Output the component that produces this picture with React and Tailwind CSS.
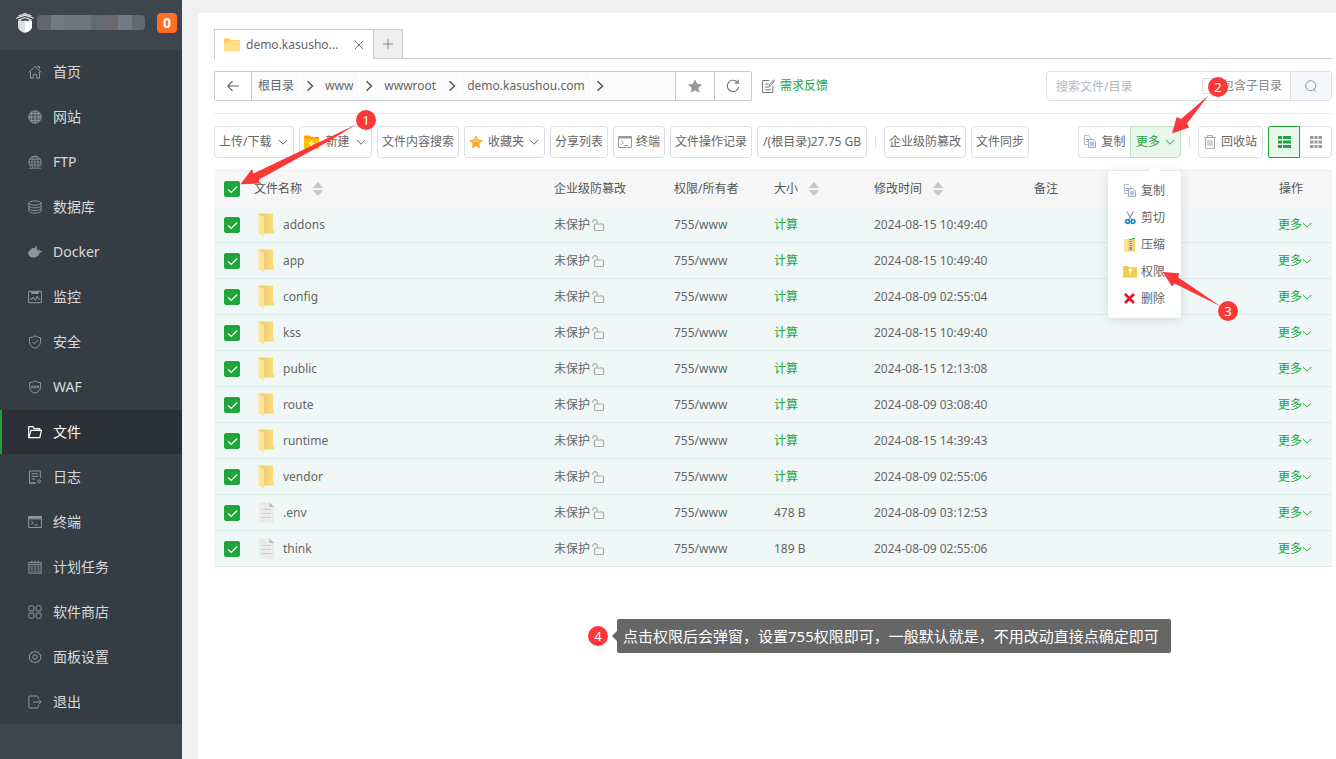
import { useState } from 'react';

const MENU = [
  { name: '首页', icon: 'home' },
  { name: '网站', icon: 'site' },
  { name: 'FTP', icon: 'ftp' },
  { name: '数据库', icon: 'database' },
  { name: 'Docker', icon: 'docker' },
  { name: '监控', icon: 'monitor' },
  { name: '安全', icon: 'safe' },
  { name: 'WAF', icon: 'waf' },
  { name: '文件', icon: 'files' },
  { name: '日志', icon: 'logs' },
  { name: '终端', icon: 'terminal' },
  { name: '计划任务', icon: 'cron' },
  { name: '软件商店', icon: 'soft' },
  { name: '面板设置', icon: 'config' },
  { name: '退出', icon: 'exit' },
];

const FILES = [
  { name: 'addons', dir: true, time: '2024-08-15 10:49:40' },
  { name: 'app', dir: true, time: '2024-08-15 10:49:40' },
  { name: 'config', dir: true, time: '2024-08-09 02:55:04' },
  { name: 'kss', dir: true, time: '2024-08-15 10:49:40' },
  { name: 'public', dir: true, time: '2024-08-15 12:13:08' },
  { name: 'route', dir: true, time: '2024-08-09 03:08:40' },
  { name: 'runtime', dir: true, time: '2024-08-15 14:39:43' },
  { name: 'vendor', dir: true, time: '2024-08-09 02:55:06' },
  { name: '.env', size: '478 B', time: '2024-08-09 03:12:53' },
  { name: 'think', size: '189 B', time: '2024-08-09 02:55:06' },
];

const PATHS = ['根目录', 'www', 'wwwroot', 'demo.kasushou.com'];

const MOSAIC = ['bg-[#5f6771]', 'bg-[#757982]', 'bg-[#6f757c]', 'bg-[#70747b]', 'bg-[#626a74]', 'bg-[#686a72]', 'bg-[#727a87]', 'bg-[#616870]'];

const MENU_ICONS = {
  home: <><path d="M.8 7.4 7 1.5l6.2 5.9M2.5 6.5v6.700h2.800V9.400h3.400v3.800h2.800V6.500" /><path d="M9.200 1.500h2.300v2.300" /></>,
  site: <><circle cx="7" cy="7" r="6.200" fill="currentColor" fillOpacity=".25" /><path d="M7 .8v12.400M.8 7h12.400M2 3.600h10M2 10.400h10M4.200 1.600c-1.300 3.400-1.300 7.400 0 10.800M9.800 1.600c1.300 3.400 1.300 7.400 0 10.800" /></>,
  ftp: <><path d="M2.700 11.600A6.100 6.100 0 1 1 11.300 11.600" /><path d="M7 .8v12M.8 7h12.400M4.600 12.800C3.400 9 3.700 4 5.400 1M9.400 12.800C10.600 9 10.300 4 8.600 1M.8 13.200h12.400M1.800 10h10.400M1.900 4.200h10.200" strokeWidth=".8" /></>,
  database: <><ellipse cx="7" cy="3" rx="6.100" ry="2.100" /><path d="M.9 3v7.900c0 1.200 2.700 2.200 6.100 2.200s6.100-1 6.100-2.200V3M.9 5.700C.9 6.900 3.600 7.800 7 7.800s6.100-.9 6.100-2.100M.9 8.400c0 1.200 2.700 2.100 6.100 2.100s6.100-.9 6.100-2.100" /></>,
  docker: <path fill="currentColor" stroke="none" d="M0 6.500h1.600V4.700h1.800V3h1.800v1.700h.2V3h1.700V1.200h1.700v3.500h1.600v1.800h.5c.4-.5.3-1.300 0-2 .9.3 1.300.9 1.400 1.500.6-.1 1.200 0 1.700.3-.3.9-1.100 1.200-2 1.200C10.900 10.500 8.800 12.600 5 12.600 2 12.600.2 10.500 0 6.500z" />,
  monitor: <><path d="M.6 1.300h12.800v11.400H.6zM3.600 1.600v1.800h6.800V1.600M2 9h2l1.300-2 2 3.500L9.200 6l1.300 3H12" /><path d="M4 2.400h6" strokeWidth="1.800" /></>,
  safe: <><path d="M7 .8c1.700 1.200 3.600 1.700 5.500 1.800v4.200c0 3.200-2.200 5.300-5.500 6.500-3.300-1.200-5.500-3.300-5.500-6.500V2.600C3.400 2.500 5.300 2 7 .8z" /><path d="m4.300 6.800 2 2 3.700-3.700" /></>,
  waf: <><path d="M7 .8c1.700 1.200 3.600 1.700 5.500 1.800v4.200c0 3.200-2.200 5.300-5.500 6.500-3.300-1.200-5.500-3.300-5.500-6.500V2.600C3.400 2.500 5.300 2 7 .8z" /><path strokeWidth="2.600" strokeOpacity=".75" strokeDasharray="2.400 .4" d="M3 6.900h8" /></>,
  files: <path strokeWidth="1.200" d="M.7 12.600V1.700h4.200l1.300 2h5.600v1.600M.8 12.600h11l1.600-7.200H3.100z" />,
  logs: <><path d="M12.300 8V1H1.500v12H8M3.700 3.800h6.400M3.700 6.400h6.400M3.700 9h3.500" /><path d="M.8 13h7" /><circle cx="11" cy="11.400" r="1.500" /></>,
  terminal: <><path d="M.6 1.500h12.800v11H.6zM.6 3.900h12.800M3.200 6l2 1.700-2 1.700M6.600 10h3.200" /><path d="M1 2.700h12" strokeWidth="1.400" /></>,
  cron: <><path d="M.9 2.400h12.200v10.700H.9zM3.900.7v2.600M7 .7v2.600M10.100.7v2.600M.9 4.700h12.200" /><path strokeDasharray="2.400 1" d="M2.400 6.900h9.600M2.400 9h9.600M2.400 11.100h9.600" /></>,
  soft: <><rect x=".9" y=".9" width="5" height="5" rx="1" /><rect x="8.100" y=".9" width="5" height="5" rx="1" /><rect x=".9" y="8.100" width="5" height="5" rx="1" /><rect x="8.100" y="8.100" width="5" height="5" rx="1" /></>,
  config: <><path d="M7 .8l1.500 1.400 2-.2.700 2 1.800 1-.6 2 .6 2-1.800 1-.7 2-2-.2L7 13.200l-1.500-1.400-2 .2-.7-2L1 9l.6-2L1 5l1.800-1 .7-2 2 .2z" /><circle cx="7" cy="7" r="2.200" /></>,
  exit: <path d="M10.400 3.600V2a1 1 0 0 0-1-1H1.900a1 1 0 0 0-1 1v10a1 1 0 0 0 1 1h7.500a1 1 0 0 0 1-1v-1.600M5 7h8.200M10.800 4.600 13.200 7l-2.400 2.400" />,
};

const MenuIcon = ({ name }) => (
  <svg viewBox="0 0 14 14" className="size-3.5 shrink-0" fill="none" stroke="currentColor" strokeWidth="1">
    {MENU_ICONS[name]}
  </svg>
);

const ChevronDown = ({ className = '' }) => (
  <svg viewBox="0 0 10 10" className={`size-2.5 shrink-0 ${className}`} fill="none" stroke="currentColor" strokeWidth="1">
    <path d="m.8 3 4.200 4.200L9.200 3" />
  </svg>
);

const ChevronRight = () => (
  <svg viewBox="0 0 10 12" className="h-3 w-2.5" fill="none" stroke="#555" strokeWidth="1.500">
    <path d="m2.500 1.200 5 4.800-5 4.800" />
  </svg>
);

const FolderOpen = () => (
  <svg viewBox="0 0 18 24" className="h-6 w-[18px] shrink-0">
    <defs>
      <linearGradient id="folder" x1="0" x2="1">
        <stop offset="0" stopColor="#ecc65c" />
        <stop offset="1" stopColor="#fadb83" />
      </linearGradient>
    </defs>
    <path d="M1.500.500H16V20.500H5z" fill="url(#folder)" />
    <path d="M15 17.500h1.800l.7 3h-2.500z" fill="#fadb83" />
    <path d="M1.500.500 7 4v20l-5.500-3.500z" fill="#ffe596" />
  </svg>
);

const FileIcon = () => (
  <svg viewBox="0 0 18 24" className="h-6 w-[18px] shrink-0">
    <path d="M2 1.500h10.500L17 6v15.500H2z" fill="#ebebeb" />
    <path d="M12.500 1.500 17 6h-4.500z" fill="#b9b9b9" />
    <path d="M5 8.500h9M5 12.500h9M5 16.500h9" stroke="#cfcccc" />
  </svg>
);

const Unlock = () => (
  <svg viewBox="0 0 14 14" className="ml-px size-3.5 shrink-0" fill="none" stroke="#aaa" strokeWidth="1.200">
    <rect x="3.500" y="6" width="9" height="6.500" rx="1" />
    <path d="M6.300 6V4a2.300 2.300 0 0 0-4.600 0v.8" />
  </svg>
);

const SortIcon = () => (
  <svg viewBox="0 0 12 14" className="h-3.5 w-3" fill="#c6c6c6">
    <path d="M6 0l5.300 6H.7zM6 14l5.300-6H.7z" />
  </svg>
);

const CopyIcon = () => (
  <svg viewBox="0 0 14 14" className="size-3.5 shrink-0" strokeWidth="1">
    <path d="M1.500.500h4L8 3v6.500H1.500z" fill="#fff" stroke="#b3b8be" />
    <path d="M3 4.500h3M3 6.500h3" stroke="#86acdf" />
    <path d="M5.500 4.500h4.600l2.400 2.300v5.700h-7z" fill="#e8f1ff" stroke="#a4acb6" />
    <path d="M7 8h4M7 10h4" stroke="#6c9cdf" />
  </svg>
);

const CutIcon = () => (
  <svg viewBox="0 0 14 14" className="size-3.5 shrink-0" fill="none">
    <path d="M4 .500 8.800 9M10.500.500 5.500 9" stroke="#8b959e" strokeWidth="1.200" />
    <circle cx="4.500" cy="10.500" r="1.900" stroke="#2088d0" strokeWidth="1.700" />
    <circle cx="10" cy="10.500" r="1.900" stroke="#2088d0" strokeWidth="1.700" />
  </svg>
);

const ZipIcon = () => (
  <svg viewBox="0 0 14 14" className="size-3.5 shrink-0">
    <path d="M1.500 1h10.500v12.500H1.500z" fill="#f3d165" />
    <path d="M1.500 1h3.500v12.500H1.500z" fill="#ffe28b" />
    <path d="M6 .500h3.500v13H6z" fill="#d9d6c7" />
    <path d="M7.700 1v8" stroke="#777" strokeWidth="2" strokeDasharray="1 1" />
    <path d="M6.700 9h2v3h-2z" fill="#888" />
    <path d="M9 .500h3" stroke="#2fc22f" />
  </svg>
);

const PermissionIcon = () => (
  <svg viewBox="0 0 14 14" className="size-3.5 shrink-0">
    <path d="M0 1h5l1 1.300h8V12.500H0z" fill="#f2cb4a" />
    <path d="M5.600 5a1.600 1.600 0 1 1 2.100 1.500V10H6.600V6.500A1.600 1.600 0 0 1 5.600 5z" fill="#fff" />
  </svg>
);

const DeleteIcon = () => (
  <svg viewBox="0 0 14 14" className="size-3.5 shrink-0" stroke="#dd1426" strokeWidth="2.600">
    <path d="m2 2 9 9M11 2l-9 9" />
  </svg>
);

const TerminalIcon = () => (
  <svg viewBox="0 0 14 12" className="h-3 w-3.5 shrink-0" fill="none" stroke="#999">
    <path d="M.5.500h13v11H.5z" />
    <path d="M.5 1.500h13" strokeWidth="2" />
    <path d="M3 4.500 5.500 6.700 3 9M6.500 9.500H10" />
  </svg>
);

const Check = ({ checked, onChange, label }) => (
  <span className="relative block size-4">
    <input
      type="checkbox"
      aria-label={label}
      checked={checked}
      onChange={onChange}
      className="block size-4 appearance-none rounded-xs border border-[#ccc] bg-white checked:border-[#20a53a] checked:bg-[#20a53a]"
    />
    {checked && (
      <svg viewBox="0 0 16 16" className="pointer-events-none absolute inset-0 size-4" fill="none" stroke="#fff" strokeWidth="1.200">
        <path d="m4 8.300 3.200 3.200 6-6" />
      </svg>
    )}
  </span>
);

const ToolButton = ({ className = '', children }) => (
  <button type="button" className={`flex h-8 shrink-0 items-center rounded border border-[#dcdfe6] bg-white px-1 whitespace-nowrap ${className}`}>
    {children}
  </button>
);

const Divider = () => <span className="mx-[3px] h-3 w-px shrink-0 bg-[#dcdfe6]" />;

const Marker = ({ className = '', children }) => (
  <span className={`flex size-5 items-center justify-center rounded-full bg-[#fb3838] text-[13px] leading-5 text-white ${className}`}>
    {children}
  </span>
);

const Sidebar = () => (
  <aside className="w-[182px] shrink-0 bg-[#3d454e] text-sm">
    <div className="flex h-[50px] items-start pt-3 pr-[5px] pl-4">
      <svg viewBox="0 0 18 22" className="h-[22px] w-[18px] shrink-0">
        <path d="M2 9 4.500 8 6 9.300 9 8.500v12.300C5 20 2 17.500 2 14.500z" fill="#dedede" />
        <path d="M16 9 13.500 8 12 9.300 9 8.500v12.300c4-.8 7-3.300 7-6.300z" fill="#fff" />
        <path d="M.3 6.300 9 3.200l8.700 3.100M2.200 8.200 9 5.500l6.800 2.700M2.500 3.900 9 1.500l6.500 2.400" fill="none" stroke="#eee" strokeWidth="1.100" />
      </svg>
      <div className="mt-[3px] ml-[3px] flex h-[15px] flex-1 overflow-hidden rounded-sm">
        {MOSAIC.map((color) => (
          <span key={color} className={`flex-1 ${color}`} />
        ))}
      </div>
      <span className="mt-px ml-3 flex size-5 items-center justify-center rounded bg-[#ff6e27] font-bold text-white">0</span>
    </div>
    <nav className="bg-[#353d44]">
      {MENU.map((item) => (
        <a
          key={item.icon}
          href={`#${item.icon}`}
          className={
            item.icon === 'files'
              ? 'mb-px flex h-11 items-center gap-[11px] border-l-2 border-[#20a53a] bg-[#2c3138] pl-[26px] text-white'
              : 'mb-px flex h-11 items-center gap-[11px] border-l-2 border-transparent pl-[26px] text-[#929598]'
          }
        >
          <MenuIcon name={item.icon} />
          <span className={item.icon === 'files' ? 'text-white' : 'text-[#d8d9da]'}>{item.name}</span>
        </a>
      ))}
    </nav>
  </aside>
);

const Tabs = () => (
  <div className="flex h-[30px] border-b border-[#ccc]">
    <div className="flex h-[30px] w-40 shrink-0 items-center border-x border-t border-[#ccc] bg-white px-[9px]">
      <svg viewBox="0 0 16 14" className="h-3.5 w-4 shrink-0">
        <path d="M0 .500h5.500l1 1.500H16V13H0z" fill="#ffcb4f" />
        <path d="M0 4 6 3.500l1-1h9v11H0z" fill="#ffe08a" />
      </svg>
      <span className="ml-1.5 flex-1">demo.kasusho...</span>
      <button type="button" aria-label="关闭">
        <svg viewBox="0 0 10 10" className="size-2.5" stroke="#777" strokeWidth="1">
          <path d="m.8.800 8.400 8.400M9.200.800.800 9.200" />
        </svg>
      </button>
    </div>
    <button type="button" aria-label="新标签" className="flex w-[29px] items-center justify-center border-t border-r border-[#ccc] bg-[#efefef]">
      <svg viewBox="0 0 10 10" className="size-2.5" stroke="#888" strokeWidth="1">
        <path d="M5 0v10M0 5h10" />
      </svg>
    </button>
  </div>
);

const PathBar = () => (
  <div className="mt-3 flex items-center">
    <div className="flex h-[30px] w-[538px] shrink-0 rounded-xs border border-[#ccc]">
      <button type="button" aria-label="返回" className="flex w-[37px] shrink-0 items-center justify-center border-r border-[#ccc]">
        <svg viewBox="0 0 12 12" className="size-3" fill="none" stroke="#666" strokeWidth="1.200">
          <path d="M12 6H1M5.500 1.200.800 6l4.700 4.800" />
        </svg>
      </button>
      <div className="flex flex-1 bg-[#fbfbfb]">
        {PATHS.map((path) => (
          <div key={path} className="flex">
            <a href={`#${path}`} className="flex items-center border-r border-white px-1.5">{path}</a>
            <span className="flex w-[18px] items-center justify-center border-r border-white">
              <ChevronRight />
            </span>
          </div>
        ))}
      </div>
      <button type="button" aria-label="收藏" className="flex w-10 shrink-0 items-center justify-center border-x border-[#ccc]">
        <svg viewBox="0 0 14 14" className="size-3.5" fill="#999">
          <path d="m7 .300 2.100 4.400 4.900.700-3.500 3.400.8 4.900L7 11.400l-4.300 2.300.8-4.900L0 5.400l4.900-.7z" />
        </svg>
      </button>
      <button type="button" aria-label="刷新" className="flex w-9 shrink-0 items-center justify-center">
        <svg viewBox="0 0 14 14" className="size-3.5" fill="none" stroke="#777" strokeWidth="1.200">
          <path d="M12.600 8A5.700 5.700 0 1 1 11.300 3.200M12.200.800v3.400H8.800" />
        </svg>
      </button>
    </div>
    <a href="#feedback" className="ml-2.5 flex items-center gap-[5px] whitespace-nowrap text-[#20a53a]">
      <svg viewBox="0 0 13 14" className="h-3.5 w-[13px]" fill="none" stroke="#777" strokeWidth="1">
        <path d="M7.500 1.500H.6v12h10.300V7M3 5h3.500M3 8h4M3 10.800h6M7 7.500l.4-1.800L11.500.900l1 .9L8.600 6.700z" />
      </svg>
      需求反馈
    </a>
    <div className="ml-auto flex h-[30px] w-[286px] shrink-0 items-center rounded border border-[#dcdfe6]">
      <input type="text" aria-label="搜索" placeholder="搜索文件/目录" className="h-full min-w-0 flex-1 px-[9px] outline-none placeholder:text-[#b3b6bb]" />
      <label className="mr-2 flex items-center gap-1 text-[#888]">
        <input type="checkbox" className="size-4 appearance-none rounded-xs border border-[#dcdfe6] bg-white" />
        包含子目录
      </label>
      <button type="button" aria-label="查找" className="flex h-full w-[41px] items-center justify-center border-l border-[#dcdfe6] bg-[#f5f7fa]">
        <svg viewBox="0 0 12 12" className="size-3" fill="none" stroke="#8d9299" strokeWidth="1">
          <circle cx="5.700" cy="5.700" r="5" />
          <path d="m8.700 9.500 2.300 2" />
        </svg>
      </button>
    </div>
  </div>
);

const MoreMenu = () => (
  <div className="absolute top-full right-0 z-10 mt-[13px] w-[73px] rounded bg-white py-1.5 shadow-[0_2px_12px_rgba(0,0,0,0.12)]">
    <span className="absolute -top-1 left-[43px] size-2 rotate-45 bg-white" />
    {[
      ['复制', CopyIcon],
      ['剪切', CutIcon],
      ['压缩', ZipIcon],
      ['权限', PermissionIcon],
      ['删除', DeleteIcon],
    ].map(([text, Icon]) => (
      <button key={text} type="button" className="flex h-[27px] w-full items-center gap-1 pl-[15px] text-[#666]">
        <Icon />
        {text}
      </button>
    ))}
  </div>
);

const Toolbar = () => (
  <div className="mt-3 flex items-center gap-[5px] border-t border-[#ebeef0] pt-3">
    <ToolButton className="w-20 justify-between pr-[5px]">
      上传/下载
      <ChevronDown />
    </ToolButton>
    <ToolButton className="w-[73px] justify-between pr-[5px]">
      <svg viewBox="0 0 15 14" className="h-3.5 w-[15px]">
        <path d="M0 .500h6l1.500 1.500H15v11.500H0z" fill="#ffa200" />
        <path d="M0 4h15v9.500H0z" fill="#ffc40d" />
        <path d="M7.500 6v5M5 8.500h5" stroke="#fff" strokeWidth="1.400" />
      </svg>
      新建
      <ChevronDown />
    </ToolButton>
    <ToolButton>文件内容搜索</ToolButton>
    <ToolButton className="w-[81px] justify-between pr-[5px]">
      <svg viewBox="0 0 14 14" className="size-3.5">
        <path d="m7 .800 1.900 4 4.500.600-3.300 3.100.8 4.500L7 10.900 3.100 13l.8-4.500L.600 5.400l4.500-.6z" fill="#f8a52d" stroke="#eda03a" strokeWidth=".5" />
        <path d="M7 2 8.500 5.300l3.500.5-3 1.500H5L2 5.800l3.500-.5z" fill="#ffc659" />
      </svg>
      收藏夹
      <ChevronDown />
    </ToolButton>
    <ToolButton>分享列表</ToolButton>
    <ToolButton className="gap-1">
      <TerminalIcon />
      终端
    </ToolButton>
    <ToolButton>文件操作记录</ToolButton>
    <ToolButton className="w-[110px] justify-center">/(根目录)27.75 GB</ToolButton>
    <Divider />
    <ToolButton>企业级防篡改</ToolButton>
    <ToolButton>文件同步</ToolButton>

    <div className="ml-auto flex items-center">
      <ToolButton className="w-[52px] justify-center gap-1 rounded-r-none border-r-0">
        <CopyIcon />
        复制
      </ToolButton>
      <div className="relative">
        <button type="button" className="flex h-8 w-[51px] items-center justify-center gap-[5px] rounded-r border border-[#b9e2c1] bg-[#e8f6eb] text-[#20a53a]">
          更多
          <ChevronDown />
        </button>
        <MoreMenu />
      </div>
      <span className="mx-2 h-3 w-px bg-[#dcdfe6]" />
      <ToolButton className="w-[65px] justify-center gap-[5px]">
        <svg viewBox="0 0 12 14" className="h-3.5 w-3" fill="none" stroke="#aaa" strokeWidth="1">
          <path d="M0 2.500h12M3.500 2.300V.600h5v1.700M1.500 2.700v10.700h9V2.700M4 5v6M6 5v6M8 5v6" />
        </svg>
        回收站
      </ToolButton>
      <button type="button" aria-label="列表" className="ml-[5px] flex h-8 w-8 items-center justify-center rounded-l-xs border border-[#20a53a] bg-[#e8f6eb]">
        <svg viewBox="0 0 13 12" className="h-3 w-[13px]" fill="#20a53a">
          <path d="M0 0h4v3H0zM5 0h8v3H5zM0 4.500h4v3H0zM5 4.500h8v3H5zM0 9h4v3H0zM5 9h8v3H5z" />
        </svg>
      </button>
      <button type="button" aria-label="图标" className="flex h-8 w-8 items-center justify-center rounded-r border border-l-0 border-[#dcdfe6] bg-white">
        <svg viewBox="0 0 12 12" className="size-3" fill="#999">
          <path d="M0 0h3.500v3H0zM4.500 0h3v3h-3zM8.500 0H12v3H8.500zM0 4.500h3.500v3H0zM4.500 4.500h3v3h-3zM8.500 4.500H12v3H8.500zM0 9h3.500v3H0zM4.500 9h3v3h-3zM8.500 9H12v3H8.500z" />
        </svg>
      </button>
    </div>
  </div>
);

const FileTable = () => {
  const [selected, setSelected] = useState(FILES.map((file) => file.name));

  const toggle = (name) => {
    setSelected((prev) => (prev.includes(name) ? prev.filter((item) => item !== name) : [...prev, name]));
  };

  const toggleAll = () => {
    setSelected((prev) => (prev.length === FILES.length ? [] : FILES.map((file) => file.name)));
  };

  return (
    <table className="mt-3 w-full table-fixed border-separate border-spacing-0 border-t border-[#ebeef0] text-left">
      <thead>
        <tr className="h-9 bg-[#f6f6f6] text-[#555]">
          <th className="w-10 pl-2.5">
            <Check label="全选" checked={selected.length === FILES.length} onChange={toggleAll} />
          </th>
          <th className="w-[290px] pr-2.5 font-normal">
            <span className="flex items-center gap-2.5">文件名称 <SortIcon /></span>
          </th>
          <th className="w-[120px] px-2.5 font-normal">企业级防篡改</th>
          <th className="w-[100px] px-2.5 font-normal">权限/所有者</th>
          <th className="w-[100px] px-2.5 font-normal">
            <span className="flex items-center gap-2.5">大小 <SortIcon /></span>
          </th>
          <th className="w-40 px-2.5 font-normal">
            <span className="flex items-center gap-2.5">修改时间 <SortIcon /></span>
          </th>
          <th className="px-2.5 font-normal">备注</th>
          <th className="w-[63px] pl-2.5 font-normal">操作</th>
        </tr>
      </thead>
      <tbody>
        {FILES.map((file) => (
          <tr key={file.name} className="h-9 bg-[#eff8f7] *:border-b *:border-[#d8eeea]">
            <td className="pl-2.5">
              <Check label={file.name} checked={selected.includes(file.name)} onChange={() => toggle(file.name)} />
            </td>
            <td className="pl-[3px]">
              <span className="flex items-center gap-2">
                {file.dir ? <FolderOpen /> : <FileIcon />}
                {file.name}
              </span>
            </td>
            <td className="px-2.5">
              <span className="flex items-center">未保护<Unlock /></span>
            </td>
            <td className="px-2.5">755/www</td>
            <td className="px-2.5">
              {file.dir ? <a href="#size" className="text-[#20a53a]">计算</a> : file.size}
            </td>
            <td className="px-2.5 whitespace-nowrap">{file.time}</td>
            <td />
            <td className="pl-[9px]">
              <button type="button" className="flex items-center text-[#20a53a]">
                更多
                <ChevronDown />
              </button>
            </td>
          </tr>
        ))}
      </tbody>
    </table>
  );
};

// numbered hints with red arrows, drawn over the panel
const Guide = () => (
  <div className="pointer-events-none absolute inset-0 z-20">
    <svg viewBox="0 0 120 64" className="absolute top-[122px] left-[240px] h-16 w-[120px]" fill="#fb3838">
      <path d="M.5 62.300 12 47l1.500 4.500L88 16l29-14-26 16-72 39.500.500 4z" />
    </svg>
    <Marker className="absolute top-[110px] left-[356px]">1</Marker>
    <svg viewBox="0 0 40 40" className="absolute top-[95px] right-[126px] size-10" fill="#fb3838">
      <path d="M2 38.500 6.700 22l4.300 2L38.500.500 17 28.500l2.200 4z" />
    </svg>
    <Marker className="absolute top-[77px] right-[108px]">2</Marker>
    <svg viewBox="0 0 60 40" className="absolute top-[270px] right-[114px] h-10 w-[60px]" fill="#fb3838">
      <path d="M.700 2 17.300 3.300l-1.300 4L59 36.500 12.500 13.500 10 16.500z" />
    </svg>
    <Marker className="absolute top-[301px] right-[98px]">3</Marker>
  </div>
);

const App = () => (
  <div className="relative flex min-h-screen bg-[#f0f0f0] font-['Noto_Sans','Noto_Sans_CJK_SC',sans-serif] text-xs text-[#666]">
    <Sidebar />
    <main className="mt-[13px] ml-4 min-w-0 flex-1 rounded-tl bg-white pt-4 pr-1 pl-4">
      <Tabs />
      <PathBar />
      <Toolbar />
      <FileTable />
      <div className="mt-[52px] flex items-center pl-[374px]">
        <Marker>4</Marker>
        <span className="ml-1 border-y-[5px] border-r-[5px] border-y-transparent border-r-[#666]" />
        <p className="rounded-xs bg-[#666] py-[5px] pr-3 pl-1.5 text-[15px] leading-6 text-white">
          点击权限后会弹窗，设置755权限即可，一般默认就是，不用改动直接点确定即可
        </p>
      </div>
    </main>
    <Guide />
  </div>
);

export default App;
